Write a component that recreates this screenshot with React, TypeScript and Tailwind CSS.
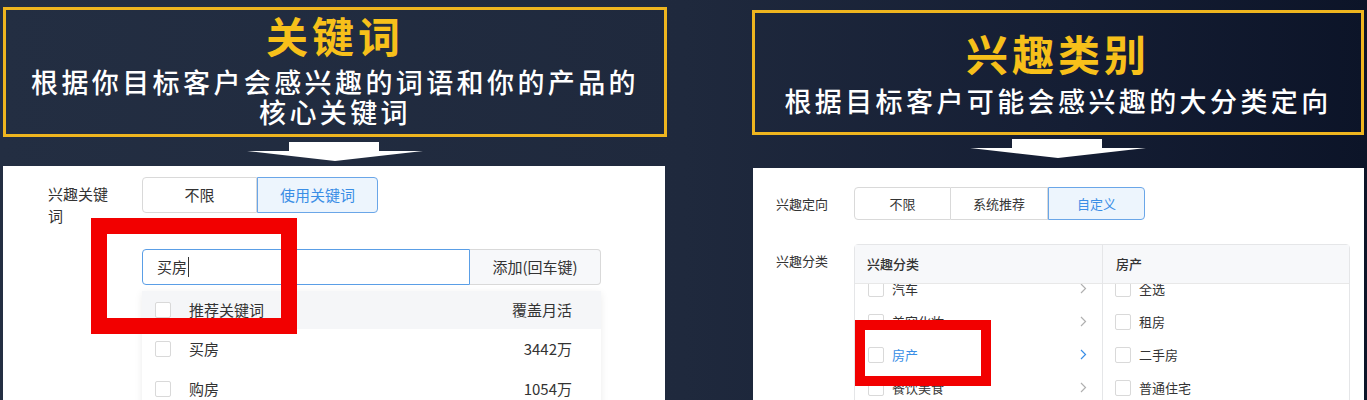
const cjk = "font-['Noto_Sans_CJK_SC','Noto_Sans',sans-serif]";

function Arrow() {
  return (
    <svg width="176" height="19" viewBox="0 0 176 19" className="block mx-auto">
      <polygon points="42,0 132,0 132,9 176,9 88,19 0,9 42,9" fill="#ffffff" />
    </svg>
  );
}

function Checkbox() {
  return <span className="inline-block w-[16px] h-[16px] shrink-0 rounded-[2px] border border-[#d9d9d9] bg-white" />;
}

function Chevron({ active }: { active?: boolean }) {
  return (
    <svg width="7" height="11" viewBox="0 0 7 11" className="shrink-0">
      <polyline points="1,1 5.5,5.5 1,10" fill="none" stroke={active ? '#3a8ee6' : '#b0b0b0'} strokeWidth="1.2" />
    </svg>
  );
}

function KeywordCard() {
  const rows = [
    { word: '买房', count: '3442万' },
    { word: '购房', count: '1054万' },
  ];
  return (
    <div className="relative mt-[5px] w-[662px] flex-1 bg-white overflow-hidden text-[15px] text-[#333]">
      <div className="flex h-[36px] mt-[11px] pl-[45px]">
        <div className="w-[94px] pr-[24px] pt-[6px] leading-[22px]">兴趣关键词</div>
        <div className="flex h-[36px]">
          <div className="w-[115px] flex items-center justify-center border border-[#d9d9d9] rounded-l-[4px]">不限</div>
          <div className="w-[121px] flex items-center justify-center border border-[#6aa6e8] bg-[#edf5fd] text-[#3a8ee6] rounded-r-[4px]">使用关键词</div>
        </div>
      </div>

      <div className="ml-[139px] mt-[36px] w-[459px]">
        <div className="flex h-[36px]">
          <div className="w-[328px] flex items-center pl-[14px] border border-[#5a9ee6] rounded-l-[4px]">
            买房<span className="ml-[1px] inline-block w-[1px] h-[20px] bg-[#333]" />
          </div>
          <div className="flex-1 flex items-center justify-center border border-l-0 border-[#d9d9d9] bg-[#f7f8fa] rounded-r-[4px]">添加(回车键)</div>
        </div>
        <div className="mt-[6px] shadow-[0_2px_8px_rgba(0,0,0,0.08)]">
          <div className="h-[38px] flex items-center pl-[13px] pr-[29px] bg-[#f5f6f8]">
            <Checkbox />
            <span className="ml-[18px]">推荐关键词</span>
            <span className="ml-auto">覆盖月活</span>
          </div>
          {rows.map((r) => (
            <div key={r.word} className="h-[40px] flex items-center pl-[13px] pr-[29px] bg-white">
              <Checkbox />
              <span className="ml-[18px]">{r.word}</span>
              <span className="ml-auto">{r.count}</span>
            </div>
          ))}
        </div>
      </div>

      <div className="absolute left-[88px] top-[52px] w-[206px] h-[116px] border-[16px] border-[#f20000]" />
    </div>
  );
}

function InterestCard() {
  const cats = [
    { name: '汽车' },
    { name: '美容化妆' },
    { name: '房产', active: true },
    { name: '餐饮美食' },
  ];
  const subs = ['全选', '租房', '二手房', '普通住宅'];
  return (
    <div className="relative mt-[10px] ml-[1px] w-[611px] flex-1 bg-white overflow-hidden text-[13px] text-[#333]">
      <div className="flex items-center pl-[23px] pt-[19px]">
        <div className="w-[78px]">兴趣定向</div>
        <div className="flex h-[33px]">
          <div className="w-[97px] flex items-center justify-center border border-[#d9d9d9] rounded-l-[4px]">不限</div>
          <div className="w-[97px] flex items-center justify-center border border-l-0 border-[#d9d9d9]">系统推荐</div>
          <div className="w-[97px] flex items-center justify-center border border-[#6aa6e8] bg-[#edf5fd] text-[#3a8ee6] rounded-r-[4px]">自定义</div>
        </div>
      </div>

      <div className="flex pl-[23px] mt-[24px]">
        <div className="w-[78px] pt-[7px] leading-[20px]">兴趣分类</div>
        <div className="w-[496px] h-[200px] flex border border-[#e5e6e8] rounded-[4px]">
          <div className="w-[248px] flex flex-col border-r border-[#e5e6e8]">
            <div className="h-[39px] shrink-0 flex items-center pl-[12px] bg-[#f7f8fa] border-b border-[#e8e8e8] font-medium">兴趣分类</div>
            <div className="overflow-hidden flex-1">
              <div className="-mt-[12px]">
                {cats.map((c) => (
                  <div key={c.name} className="h-[33px] flex items-center pl-[13px] pr-[15px]">
                    <Checkbox />
                    <span className={`ml-[8px] ${c.active ? 'text-[#3a8ee6]' : ''}`}>{c.name}</span>
                    <span className="ml-auto"><Chevron active={c.active} /></span>
                  </div>
                ))}
              </div>
            </div>
          </div>
          <div className="flex-1 flex flex-col">
            <div className="h-[39px] shrink-0 flex items-center pl-[13px] bg-[#f7f8fa] border-b border-[#e8e8e8] font-medium">房产</div>
            <div className="overflow-hidden flex-1">
              <div className="-mt-[12px]">
                {subs.map((s) => (
                  <div key={s} className="h-[33px] flex items-center pl-[12px]">
                    <Checkbox />
                    <span className="ml-[8px]">{s}</span>
                  </div>
                ))}
              </div>
            </div>
          </div>
        </div>
      </div>

      <div className="absolute left-[102px] top-[152px] w-[136px] h-[66px] border-[10px] border-[#f20000]" />
    </div>
  );
}

export default function App() {
  return (
    <div className={`w-[1367px] h-[400px] overflow-hidden flex bg-[linear-gradient(90deg,#232e42_0%,#1f293d_50%,#151e34_78%,#0c1428_100%)] ${cjk}`}>
      {/* 关键词 */}
      <div className="ml-[3px] w-[664px] pt-[7px] flex flex-col">
        <div className="h-[130px] border-[3px] border-[#eeb51f] flex flex-col items-center pt-[3px]">
          <div className="text-[42px] leading-[44px] font-bold tracking-[4px] text-[#f7c01a]">关键词</div>
          <div className="mt-[10px] text-[27px] leading-[30px] font-medium tracking-[3.4px] text-white text-center">
            <div>根据你目标客户会感兴趣的词语和你的产品的</div>
            <div>核心关键词</div>
          </div>
        </div>
        <div className="mt-[5px]"><Arrow /></div>
        <KeywordCard />
      </div>

      {/* 兴趣类别 */}
      <div className="ml-[85px] w-[612px] pt-[10px] flex flex-col">
        <div className="h-[125px] border-[3px] border-[#eeb51f] flex flex-col items-center pt-[18px]">
          <div className="text-[42px] leading-[44px] font-bold tracking-[4px] text-[#f7c01a]">兴趣类别</div>
          <div className="mt-[11px] text-[27px] leading-[29px] font-medium tracking-[3.4px] text-white">根据目标客户可能会感兴趣的大分类定向</div>
        </div>
        <div className="mt-[4px]"><Arrow /></div>
        <InterestCard />
      </div>
    </div>
  );
}
